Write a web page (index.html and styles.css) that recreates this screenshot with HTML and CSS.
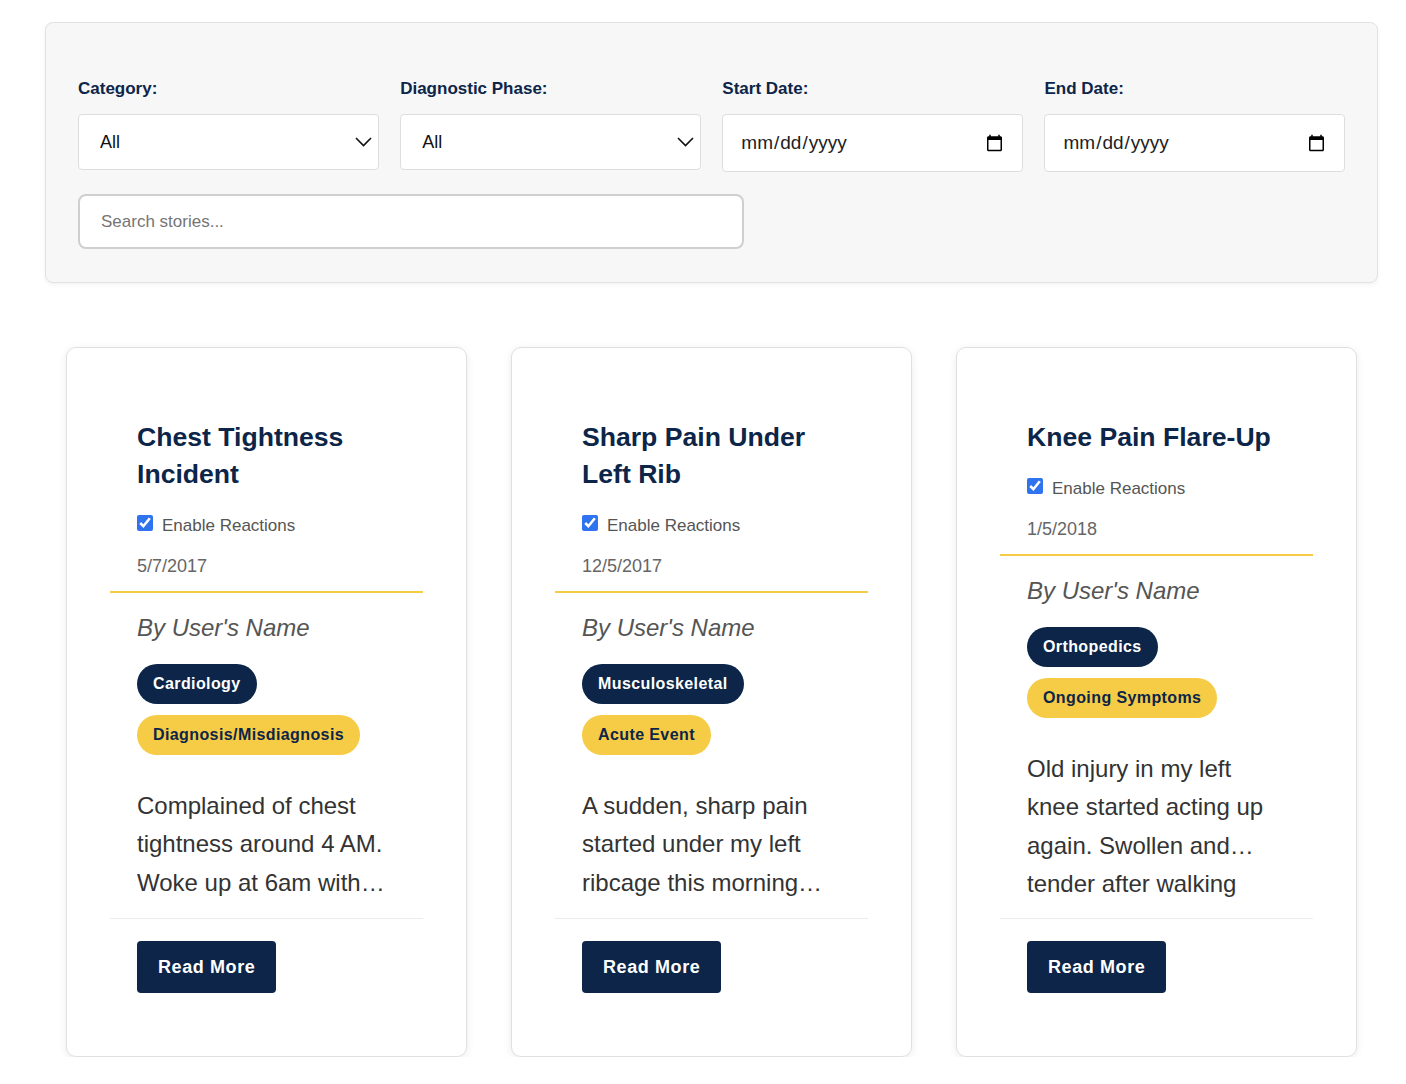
FILE: index.html
```html
<!DOCTYPE html>
<html lang="en">
<head>
<meta charset="utf-8">
<title>Stories</title>
<link rel="stylesheet" href="styles.css">
</head>
<body>
<section class="filters">
  <div class="filter-grid">
    <div class="field">
      <label class="field-label" for="cat">Category:</label>
      <div class="select-wrap">
        <select id="cat" class="select"><option>All</option></select>
        <svg class="chevron" width="17" height="10" viewBox="0 0 17 10"><polyline points="1,1 8.5,8.5 16,1" fill="none" stroke="#111" stroke-width="1.6"/></svg>
      </div>
    </div>
    <div class="field">
      <label class="field-label" for="phase">Diagnostic Phase:</label>
      <div class="select-wrap">
        <select id="phase" class="select"><option>All</option></select>
        <svg class="chevron" width="17" height="10" viewBox="0 0 17 10"><polyline points="1,1 8.5,8.5 16,1" fill="none" stroke="#111" stroke-width="1.6"/></svg>
      </div>
    </div>
    <div class="field">
      <label class="field-label" for="start">Start Date:</label>
      <input id="start" class="date" type="date">
    </div>
    <div class="field">
      <label class="field-label" for="end">End Date:</label>
      <input id="end" class="date" type="date">
    </div>
  </div>
  <input class="search" type="text" placeholder="Search stories...">
</section>

<section class="cards">
  <article class="card">
    <header class="card-head">
      <h2 class="card-title">Chest Tightness Incident</h2>
      <label class="reactions"><input type="checkbox" checked> <span>Enable Reactions</span></label>
      <div class="card-date">5/7/2017</div>
    </header>
    <div class="card-body">
      <div class="author">By User's Name</div>
      <div class="tags">
        <span class="tag tag-navy">Cardiology</span>
        <span class="tag tag-yellow">Diagnosis/Misdiagnosis</span>
      </div>
      <p class="excerpt clamp">Complained of chest tightness around 4 AM. Woke up at 6am with pressure in my chest and shortness of breath.</p>
    </div>
    <footer class="card-foot"><button class="btn">Read More</button></footer>
  </article>

  <article class="card">
    <header class="card-head">
      <h2 class="card-title">Sharp Pain Under Left Rib</h2>
      <label class="reactions"><input type="checkbox" checked> <span>Enable Reactions</span></label>
      <div class="card-date">12/5/2017</div>
    </header>
    <div class="card-body">
      <div class="author">By User's Name</div>
      <div class="tags">
        <span class="tag tag-navy">Musculoskeletal</span>
        <span class="tag tag-yellow">Acute Event</span>
      </div>
      <p class="excerpt clamp">A sudden, sharp pain started under my left ribcage this morning while I was getting out of bed.</p>
    </div>
    <footer class="card-foot"><button class="btn">Read More</button></footer>
  </article>

  <article class="card">
    <header class="card-head">
      <h2 class="card-title">Knee Pain Flare-Up</h2>
      <label class="reactions"><input type="checkbox" checked> <span>Enable Reactions</span></label>
      <div class="card-date">1/5/2018</div>
    </header>
    <div class="card-body">
      <div class="author">By User's Name</div>
      <div class="tags">
        <span class="tag tag-navy">Orthopedics</span>
        <span class="tag tag-yellow">Ongoing Symptoms</span>
      </div>
      <p class="excerpt">Old injury in my left knee started acting up again. Swollen and…<br>tender after walking</p>
    </div>
    <footer class="card-foot"><button class="btn">Read More</button></footer>
  </article>
</section>
</body>
</html>
```

FILE: styles.css
```css
* { box-sizing: border-box; }

body {
  margin: 0;
  background: #fff;
  font-family: "Liberation Sans", Arial, Helvetica, sans-serif;
  color: #333;
}

.filters {
  margin: 22px 28px 0 45px;
  width: 1333px;
  background: #f7f7f7;
  border: 1px solid #e2e2e2;
  border-radius: 8px;
  box-shadow: 0 2px 4px rgba(0, 0, 0, 0.05);
  padding: 56px 32px 33px;
}

.filter-grid {
  display: grid;
  grid-template-columns: repeat(4, 1fr);
  column-gap: 21.67px;
  align-items: start;
}

.field { display: flex; flex-direction: column; }

.field-label {
  font-size: 17px;
  line-height: 20px;
  font-weight: 700;
  color: #0c2548;
  margin-bottom: 15px;
}

.select-wrap { position: relative; }

.select {
  appearance: none;
  -webkit-appearance: none;
  width: 100%;
  height: 56px;
  border: 1px solid #dedede;
  border-radius: 4px;
  background: #fff;
  font-family: inherit;
  font-size: 18px;
  color: #111;
  padding: 0 40px 0 21px;
  margin: 0;
}

.chevron {
  position: absolute;
  right: 7px;
  top: 23px;
  pointer-events: none;
}

.date {
  width: 100%;
  height: 58px;
  border: 1px solid #dedede;
  border-radius: 4px;
  background: #fff;
  font-family: inherit;
  font-size: 19px;
  color: #222;
  padding: 0 16px 0 17px;
  margin: 0;
}

.search {
  display: block;
  margin-top: 22px;
  width: 666px;
  height: 55px;
  border: 2px solid #cfcfcf;
  border-radius: 8px;
  background: #fff;
  font-family: inherit;
  font-size: 17px;
  padding: 0 20px 0 21px;
  color: #333;
}
.search::placeholder { color: #757575; }

.cards {
  display: grid;
  grid-template-columns: repeat(3, 401px);
  column-gap: 44px;
  margin: 64px 0 0 66px;
}

.card {
  height: 710px;
  background: #fff;
  border: 1px solid #e0e0e0;
  border-radius: 10px;
  box-shadow: 0 2px 8px rgba(0, 0, 0, 0.08);
  padding: 43px;
  display: flex;
  flex-direction: column;
}

.card-head {
  padding: 28px 27px 14px;
  border-bottom: 2px solid #f6cb45;
}

.card-title {
  margin: 0;
  font-size: 26.6px;
  line-height: 37px;
  font-weight: 700;
  color: #0c2548;
}

.reactions {
  display: flex;
  align-items: center;
  gap: 9px;
  margin-top: 20px;
  height: 20px;
  font-size: 17px;
  color: #555;
}
.reactions input {
  width: 16px;
  height: 16px;
  margin: 0;
  accent-color: #2f74ee;
}
.reactions span { position: relative; top: 3px; }

.card-date {
  margin-top: 22px;
  font-size: 18px;
  line-height: 22px;
  color: #666;
}

.card-body { padding: 0 27px; }

.author {
  margin-top: 20px;
  font-size: 24px;
  line-height: 29px;
  font-style: italic;
  color: #555;
}

.tags {
  display: flex;
  flex-wrap: wrap;
  align-items: flex-start;
  gap: 11px 8px;
  margin-top: 22px;
}

.tag {
  display: inline-block;
  font-size: 16px;
  line-height: 20px;
  font-weight: 700;
  letter-spacing: 0.4px;
  padding: 10px 16px;
  border-radius: 20px;
}
.tag-navy { background: #0c2548; color: #fff; }
.tag-yellow { background: #f6cb45; color: #0c2548; }

.excerpt {
  margin: 32px 0 0;
  font-size: 24px;
  line-height: 38.4px;
  color: #333;
}
.clamp {
  display: -webkit-box;
  -webkit-box-orient: vertical;
  -webkit-line-clamp: 3;
  overflow: hidden;
}

.card-foot {
  margin-top: auto;
  border-top: 1px solid #ececec;
  padding: 22px 27px 20px;
}

.btn {
  display: block;
  height: 52px;
  padding: 0 21px;
  border: none;
  border-radius: 4px;
  background: #0c2548;
  color: #fff;
  font-family: inherit;
  font-size: 18px;
  font-weight: 700;
  letter-spacing: 0.6px;
}
```
